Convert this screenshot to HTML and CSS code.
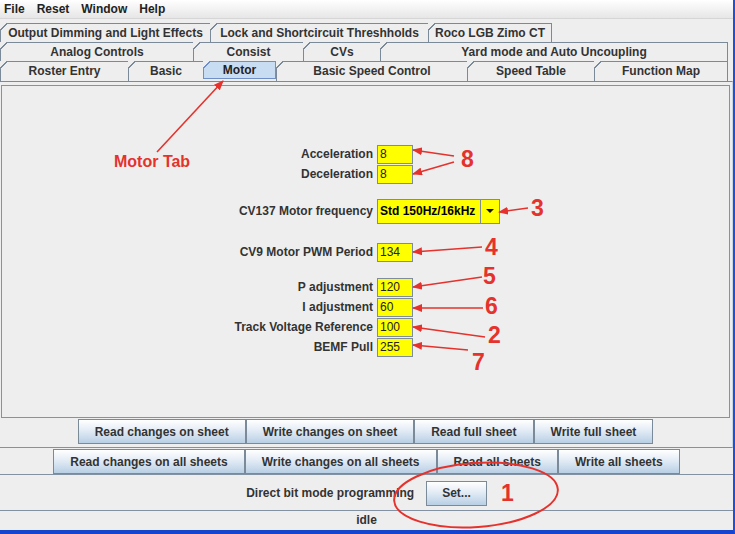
FILE: index.html
```html
<!doctype html>
<html>
<head>
	<title>Motor</title>
	<link rel="stylesheet" href="styles.css">
</head>
<body>
	<div class="window">
		<div class="menubar">
			<span>File</span><span>Reset</span><span>Window</span><span>Help</span>
		</div>

		<div class="tabpane">
			<div class="tabrow">
				<div class="tab w-output">Output Dimming and Light Effects</div>
				<div class="tab w-lock">Lock and Shortcircuit Threshholds</div>
				<div class="tab w-roco last">Roco LGB Zimo CT</div>
			</div>
			<div class="tabrow">
				<div class="tab w-analog">Analog Controls</div>
				<div class="tab w-consist">Consist</div>
				<div class="tab w-cvs">CVs</div>
				<div class="tab w-yard last">Yard mode and Auto Uncoupling</div>
			</div>
			<div class="tabrow front">
				<div class="tab w-roster">Roster Entry</div>
				<div class="tab w-basic">Basic</div>
				<div class="tab w-motor selected">Motor</div>
				<div class="tab w-bsc">Basic Speed Control</div>
				<div class="tab w-table">Speed Table</div>
				<div class="tab w-fmap last">Function Map</div>
			</div>

			<div class="tabbody">
				<div class="sheet">
					<div class="form">
						<div class="row"><label>Acceleration</label><div class="field">8</div></div>
						<div class="row"><label>Deceleration</label><div class="field">8</div></div>
						<div class="row combo-row">
							<label>CV137 Motor frequency</label>
							<div class="combo">
								<div class="combo-value">Std 150Hz/16kHz</div>
								<div class="combo-arrow"><span class="tri"></span></div>
							</div>
						</div>
						<div class="row cv9-row"><label>CV9 Motor PWM Period</label><div class="field">134</div></div>
						<div class="row p-row"><label>P adjustment</label><div class="field">120</div></div>
						<div class="row"><label>I adjustment</label><div class="field">60</div></div>
						<div class="row"><label>Track Voltage Reference</label><div class="field">100</div></div>
						<div class="row"><label>BEMF Pull</label><div class="field">255</div></div>
					</div>
				</div>
				<div class="buttons sheet-buttons">
					<button>Read changes on sheet</button>
					<button>Write changes on sheet</button>
					<button>Read full sheet</button>
					<button>Write full sheet</button>
				</div>
			</div>
		</div>

		<div class="buttons all-buttons">
			<button>Read changes on all sheets</button>
			<button>Write changes on all sheets</button>
			<button>Read all sheets</button>
			<button>Write all sheets</button>
		</div>

		<div class="progmode">
			<span>Direct bit mode programming</span>
			<button>Set...</button>
		</div>

		<div class="status">idle</div>
	</div>

	<!-- red annotations drawn over the screenshot -->
	<svg class="notes" width="735" height="534" viewBox="0 0 735 534">
		<defs>
			<marker id="head" viewBox="0 0 10 8" refX="9" refY="4" markerWidth="10" markerHeight="8" markerUnits="userSpaceOnUse" orient="auto">
				<path d="M0 0 L10 4 L0 8 Z" fill="#e5322d"/>
			</marker>
		</defs>
		<g stroke="#e5322d" stroke-width="1.6" marker-end="url(#head)">
			<line x1="157" y1="152" x2="223" y2="81"/>
			<line x1="454" y1="156" x2="413" y2="150"/>
			<line x1="454" y1="162" x2="413" y2="174"/>
			<line x1="528" y1="208" x2="499" y2="212"/>
			<line x1="482" y1="247" x2="413" y2="252"/>
			<line x1="482" y1="277" x2="413" y2="287"/>
			<line x1="483" y1="308" x2="413" y2="308"/>
			<line x1="485" y1="337" x2="413" y2="327"/>
			<line x1="468" y1="350" x2="413" y2="345"/>
		</g>
		<ellipse cx="476" cy="495" rx="82" ry="32" transform="rotate(-4 476 495)" fill="none" stroke="#e5322d" stroke-width="2"/>
		<g class="note-text">
			<text x="114" y="167" class="small">Motor Tab</text>
			<text x="461" y="167">8</text>
			<text x="531" y="216">3</text>
			<text x="485" y="255">4</text>
			<text x="483" y="284">5</text>
			<text x="485" y="314">6</text>
			<text x="488" y="343">2</text>
			<text x="472" y="370">7</text>
			<text x="501" y="501">1</text>
		</g>
	</svg>
</body>
</html>
```

FILE: styles.css
```css
body {
	margin: 0;
	position: relative;
	background: #eeeeee;
	font-family: "Liberation Sans", Arial, sans-serif;
	font-size: 12px;
	font-weight: bold;
	color: #333333;
}

.window {
	width: 733px;
	height: 530px;
	border-right: 2px solid #1f50d9;
	border-bottom: 4px solid #1744cf;
	background: #eeeeee;
}

/* menu */
.menubar {
	height: 18px;
	line-height: 18px;
	padding-left: 4px;
	background: linear-gradient(#ffffff, #e6e6e6);
	border-bottom: 1px solid #d6d6d6;
	color: #222;
}

.menubar span {
	margin-right: 12px;
}

/* tabs */
.tabpane {
	padding-top: 4px;
}

.tabrow {
	display: flex;
	height: 19px;
}

.tabrow.front {
	height: 20px;
}

.tab {
	position: relative;
	box-sizing: border-box;
	border-top: 1px solid #7a8a99;
	border-left: 1px solid #7a8a99;
	line-height: 18px;
	text-align: center;
	white-space: nowrap;
}

.tab.last {
	border-right: 1px solid #7a8a99;
}

.tab::before {
	content: '';
	position: absolute;
	left: -1px;
	top: -1px;
	width: 7px;
	height: 7px;
	background: linear-gradient(135deg, #eeeeee 0 46%, #7a8a99 46% 58%, transparent 58%);
}

.tab.selected {
	height: 18px;
	border: 1px solid #6f8fc6;
	background: #c8ddf2;
	line-height: 16px;
	color: #222;
}

.tab.selected::before {
	background: linear-gradient(135deg, #eeeeee 0 46%, #6f8fc6 46% 58%, transparent 58%);
}

.w-output { width: 210px; }
.w-lock { width: 218px; }
.w-roco { width: 124px; }
.w-analog { width: 193px; }
.w-consist { width: 110px; }
.w-cvs { width: 77px; }
.w-yard { width: 348px; }
.w-roster { width: 128px; }
.w-basic { width: 75px; }
.w-motor { width: 73px; }
.w-bsc { width: 191px; }
.w-table { width: 127px; }
.w-fmap { width: 134px; }

.tabbody {
	border-top: 1px solid #7a8a99;
	border-right: 1px solid #c6d6e6;
	border-bottom: 1px solid #8292a3;
	padding: 3px 2px 0 1px;
}

.sheet {
	height: 331px;
	border: 1px solid #8d9197;
	display: flex;
	align-items: center;
	justify-content: center;
}

/* motor form */
.form {
	display: flex;
	flex-direction: column;
	padding-left: 2px;
	margin-top: -2px;
}

.row {
	display: flex;
	align-items: center;
	gap: 4px;
	height: 19px;
	margin-top: 1px;
}

.row:first-child {
	margin-top: 0;
}

.row label {
	width: 140px;
	text-align: right;
	white-space: nowrap;
}

.row.combo-row {
	height: 25px;
	margin-top: 15px;
}

.row.cv9-row {
	margin-top: 19px;
}

.row.p-row {
	margin-top: 16px;
}

.field {
	box-sizing: border-box;
	width: 36px;
	height: 19px;
	border: 1px solid #7f8d9b;
	background: #ffff00;
	padding-left: 2px;
	line-height: 17px;
	font-weight: normal;
	color: #222;
}

.combo {
	display: flex;
	box-sizing: border-box;
	width: 123px;
	height: 25px;
	border: 1px solid #7f8d9b;
	background: #ffff00;
	color: #000;
}

.combo-value {
	flex: 1;
	padding-left: 2px;
	line-height: 23px;
	border-right: 1px solid #7f8d9b;
}

.combo-arrow {
	width: 18px;
	display: flex;
	align-items: center;
	justify-content: center;
}

.tri {
	width: 0;
	height: 0;
	border-left: 4px solid transparent;
	border-right: 4px solid transparent;
	border-top: 4px solid #111;
}

/* button rows */
.buttons {
	display: flex;
	justify-content: center;
}

button {
	box-sizing: border-box;
	height: 25px;
	padding: 0 16px;
	border: 1px solid #7a8a99;
	background: linear-gradient(#ffffff 0%, #e3ecf5 45%, #b8cfe5 100%);
	font-family: "Liberation Sans", Arial, sans-serif;
	font-size: 12px;
	font-weight: bold;
	color: #333333;
	white-space: nowrap;
}

.sheet-buttons {
	height: 28px;
	padding-top: 1px;
}

.all-buttons {
	height: 26px;
	align-items: flex-end;
	border-bottom: 1px solid #8292a3;
}

.progmode {
	height: 36px;
	display: flex;
	justify-content: center;
	align-items: center;
	gap: 12px;
	border-bottom: 1px solid #8292a3;
	padding-top: 1px;
	box-sizing: border-box;
}

.progmode button {
	padding: 0 15px;
}

.status {
	height: 18px;
	line-height: 18px;
	text-align: center;
}

/* annotations */
.notes {
	position: absolute;
	top: 0;
	left: 0;
	pointer-events: none;
}

.note-text text {
	font-family: "Liberation Sans", Arial, sans-serif;
	font-size: 23px;
	font-weight: bold;
	fill: #e5322d;
}

.note-text text.small {
	font-size: 16px;
}
```
